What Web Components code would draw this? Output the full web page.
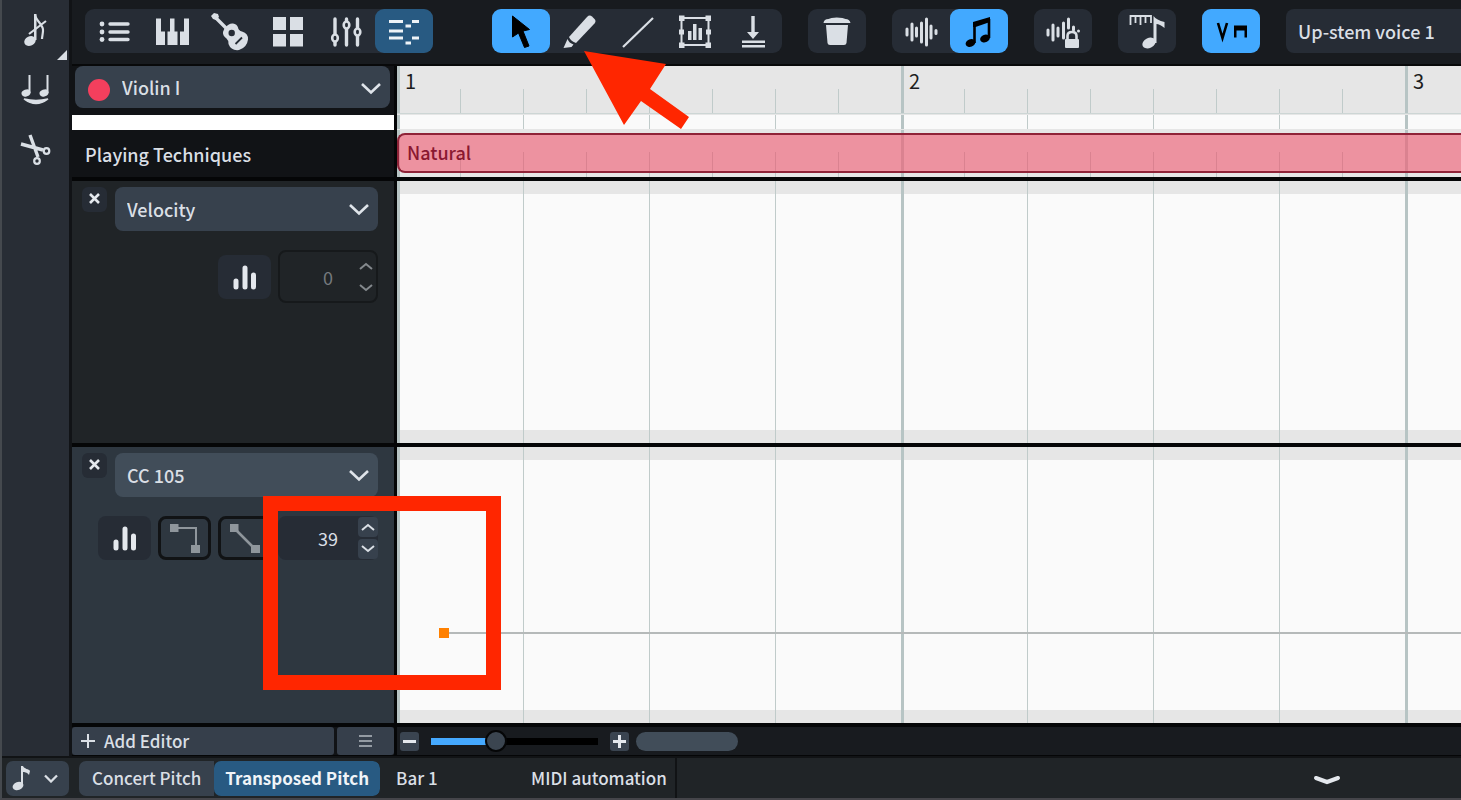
<!DOCTYPE html>
<html lang="en">
  <head>
    <meta charset="utf-8">
    <title>Key Editor</title>
    <style>
      html, body {
        height: 100%;
        margin: 0;
      }
      body {
        background: #111316;
        color: #dadfe5;
        font: 500 18px/24px "Noto Sans CJK SC", "Noto Sans", sans-serif;
        overflow: hidden;
      }
    </style>
  </head>
  <body>
    <template id="score-app-template">
      <style>
        :host {
          display: flex;
          flex-direction: column;
          height: 100%;
          min-height: 600px;
          position: relative;
          box-sizing: border-box;
          border-left: 2px solid #45494e;
          border-bottom: 2px solid #45454a;
          overflow: hidden;
        }
        .work {
          display: flex;
          flex: 1;
          min-height: 0;
          gap: 3px;
        }
        .zone {
          display: flex;
          flex-direction: column;
          flex: 1;
          min-width: 0;
        }
        .mark {
          position: absolute;
          pointer-events: none;
        }
        .arrow {
          left: 580px;
          top: 48px;
        }
        .frame {
          left: 261px;
          top: 496px;
          width: 208px;
          height: 164px;
          border: 15px solid #ff2600;
        }
      </style>
      <div class="work">
        <tool-box></tool-box>
        <div class="zone">
          <editor-toolbar></editor-toolbar>
          <key-editor></key-editor>
        </div>
      </div>
      <status-bar></status-bar>
      <svg class="mark arrow" width="112" height="84"><path fill="#ff2600" d="M2 3 84 16 68 41 107 69 99 81 59 53 42 77z"/></svg>
      <div class="mark frame"></div>
    </template>

    <template id="tool-box-template">
      <style>
        :host {
          display: flex;
          flex-direction: column;
          width: 67px;
          background: #282d35;
        }
        button {
          position: relative;
          height: 60px;
          padding: 0;
          border: 0;
          background: none;
          color: #dadfe5;
        }
        i {
          position: absolute;
          right: 2px;
          bottom: 0;
          border: 5px solid transparent;
          border-right-color: currentColor;
          border-bottom-color: currentColor;
        }
      </style>
      <button aria-label="Grace notes"><ui-icon name="grace"></ui-icon><i></i></button>
      <button aria-label="Tie"><ui-icon name="tie"></ui-icon></button>
      <button aria-label="Scissors"><ui-icon name="scissors"></ui-icon></button>
    </template>

    <template id="editor-toolbar-template">
      <style>
        :host {
          display: flex;
          align-items: center;
          gap: 26px;
          height: 44px;
          padding: 9px 0 11px 13px;
          background: #181b1f;
          border-bottom: 2px solid #08090a;
        }
        tool-group:first-of-type {
          margin-right: 33px;
        }
        .voice {
          flex: 1 0 164px;
          height: 44px;
          padding: 0 12px;
          border: 0;
          border-radius: 8px 0 0 8px;
          background: #262c35;
          color: inherit;
          font: inherit;
          appearance: none;
        }
      </style>
      <tool-group>
        <tool-button icon="list" label="Track list"></tool-button>
        <tool-button icon="piano" label="Keyboard"></tool-button>
        <tool-button icon="guitar" label="Fretboard"></tool-button>
        <tool-button icon="pads" label="Drum pads"></tool-button>
        <tool-button icon="mixer" label="Mixer"></tool-button>
        <tool-button icon="editor" label="Key editor" tone="deep"></tool-button>
      </tool-group>
      <tool-group>
        <tool-button icon="pointer" label="Select" tone="bright"></tool-button>
        <tool-button icon="pencil" label="Draw"></tool-button>
        <tool-button icon="line" label="Line"></tool-button>
        <tool-button icon="transform" label="Transform"></tool-button>
        <tool-button icon="drop" label="Percussion"></tool-button>
      </tool-group>
      <tool-group><tool-button icon="trash" label="Delete"></tool-button></tool-group>
      <tool-group>
        <tool-button icon="wave" label="Played durations"></tool-button>
        <tool-button icon="notes" label="Notated durations" tone="bright"></tool-button>
      </tool-group>
      <tool-group><tool-button icon="wavelock" label="Lock durations"></tool-button></tool-group>
      <tool-group><tool-button icon="ruler" label="Quantize"></tool-button></tool-group>
      <tool-group><tool-button icon="bows" label="Playing techniques" tone="bright"></tool-button></tool-group>
      <select class="voice" aria-label="Voice"><option>Up-stem voice 1</option></select>
    </template>

    <template id="key-editor-template">
      <style>
        :host {
          display: grid;
          grid-template-columns: 322px minmax(0, 1fr);
          grid-template-rows: 49px 58px minmax(0, 262fr) minmax(0, 277fr) 28px;
          column-gap: 3px;
          row-gap: 4px;
          flex: 1;
          min-height: 0;
          padding-bottom: 1px;
          background: #050607;
        }
        .track {
          padding: 0 4px 0 3px;
          background: #111316;
        }
        .techniques {
          display: flex;
          align-items: center;
          padding: 0 13px;
          border-top: 15px solid #fff;
          margin-top: -4px;
          background: #111316;
        }
        .add {
          display: flex;
          gap: 3px;
          background: #111316;
          font-size: 17px;
        }
        .add button {
          display: flex;
          align-items: center;
          justify-content: center;
          width: 57px;
          padding: 0;
          border: 0;
          border-radius: 3px;
          background: #363f4b;
          color: inherit;
          font: inherit;
        }
        .add .new {
          flex: 1;
          justify-content: flex-start;
          gap: 8px;
          padding-left: 8px;
        }
        .head {
          grid-column: 2;
          grid-row: 1 / 3;
        }
      </style>
      <div class="track"><drop-down dot label="Instrument">Violin I</drop-down></div>
      <time-ruler class="head"></time-ruler>
      <div class="techniques">Playing Techniques</div>
      <lane-panel name="Velocity" value="0"></lane-panel>
      <lane-grid></lane-grid>
      <lane-panel name="CC 105" value="39" active></lane-panel>
      <lane-grid point></lane-grid>
      <div class="add">
        <button class="new"><svg width="16" height="16" stroke="currentColor" stroke-width="2"><path d="M1 8h14M8 1v14"/></svg>Add Editor</button>
        <button aria-label="Editor menu"><svg width="14" height="14" stroke="#949ba3" stroke-width="2"><path d="M0 2h13M0 7h13M0 12h13"/></svg></button>
      </div>
      <zoom-bar></zoom-bar>
    </template>

    <template id="drop-down-template">
      <style>
        :host {
          display: flex;
          position: relative;
        }
        select {
          flex: 1;
          height: 44px;
          padding: 0 12px;
          border: 0;
          border-radius: 8px;
          background: var(--fill, #37414d);
          color: inherit;
          font: inherit;
          appearance: none;
        }
        :host([dot]) select {
          height: 42px;
          padding-left: 47px;
        }
        .dot {
          display: none;
          position: absolute;
          left: 13px;
          top: 13px;
          width: 22px;
          height: 22px;
          border-radius: 50%;
          background: #f43f5d;
        }
        :host([dot]) .dot {
          display: block;
        }
        svg {
          position: absolute;
          right: 9px;
          top: 16px;
          pointer-events: none;
        }
      </style>
      <select><option></option></select>
      <span class="dot"></span>
      <svg width="20" height="13" fill="none" stroke="#dfe4ea" stroke-width="2.6"><path d="M1 2 10 10.500 19 2"/></svg>
    </template>

    <template id="lane-panel-template">
      <style>
        :host {
          display: block;
          box-sizing: border-box;
          padding: 6px 16px 0 10px;
          background: #202427;
          overflow: hidden;
        }
        :host([active]) {
          background: #2e3740;
          --fill: #414d59;
        }
        .top {
          display: flex;
          align-items: flex-start;
          gap: 8px;
        }
        drop-down {
          flex: 1;
        }
        button {
          padding: 0;
          border: 0;
          border-radius: 8px;
          background: #262c35;
          color: #e4e8ed;
        }
        .close {
          width: 25px;
          height: 25px;
          border-radius: 6px;
        }
        .tools {
          display: flex;
          justify-content: flex-end;
          align-items: center;
          gap: 7px;
          margin-top: 19px;
        }
        .tools > button {
          display: flex;
          align-items: center;
          justify-content: center;
          width: 53px;
          height: 44px;
        }
        .tools > .shape {
          border: 3px solid #111315;
          background: none;
          color: #8f969c;
        }
        .number {
          display: flex;
          box-sizing: border-box;
          width: 100px;
          height: 53px;
          border: 2px solid #16191b;
          border-radius: 8px;
        }
        input {
          flex: 1;
          min-width: 0;
          padding: 0;
          border: 0;
          background: none;
          color: #dadfe5;
          font: inherit;
          font-weight: 400;
          text-align: center;
          padding-left: 20px;
        }
        input:disabled {
          color: #74797d;
        }
        .spin {
          display: flex;
          flex-direction: column;
          justify-content: center;
          gap: 2px;
          width: 20px;
        }
        .spin button {
          display: flex;
          align-items: center;
          justify-content: center;
          height: 20px;
          border-radius: 4px;
          background: none;
          color: #84898d;
        }
        :host([active]) .number {
          height: 44px;
          border: 0;
          background: #262c35;
        }
        :host([active]) .spin button {
          background: #37414d;
          color: #dadfe5;
        }
        :host(:not([active])) .shape {
          display: none;
        }
      </style>
      <div class="top">
        <button class="close" aria-label="Remove lane"><svg width="11" height="11" stroke="currentColor" stroke-width="2.6"><path d="m1 1 9 9M10 1 1 10"/></svg></button>
        <drop-down></drop-down>
      </div>
      <div class="tools">
        <button aria-label="Histogram"><svg width="26" height="28" stroke="currentColor" stroke-width="5" stroke-linecap="round"><path d="M4 18v6M13 5v19M21.500 12v12"/></svg></button>
        <button class="shape" aria-label="Constant"><svg width="32" height="32"><path fill="none" stroke="currentColor" stroke-width="2" d="M5 6h22v20"/><path fill="currentColor" d="M1 2h8.500v8H1zM22 23h9v8h-9z"/></svg></button>
        <button class="shape" aria-label="Linear"><svg width="32" height="32"><path fill="none" stroke="currentColor" stroke-width="2.500" d="m6 7 20 20"/><path fill="currentColor" d="M1 2h8.500v8H1zM22 23h9v8h-9z"/></svg></button>
        <div class="number">
          <input type="text" inputmode="numeric" aria-label="Value">
          <div class="spin">
            <button aria-label="Increase"><svg width="14" height="8" fill="none" stroke="currentColor" stroke-width="2"><path d="m1 7 6-5 6 5"/></svg></button>
            <button aria-label="Decrease"><svg width="14" height="8" fill="none" stroke="currentColor" stroke-width="2"><path d="m1 1 6 5 6-5"/></svg></button>
          </div>
        </div>
      </div>
    </template>

    <template id="time-ruler-template">
      <style>
        :host {
          --beat: linear-gradient(90deg, #c0cbca 1px, transparent 1px) 0 0 / 126px 100%;
          --half: linear-gradient(90deg, #c0cbca 1px, transparent 1px) 0 100% / 63px 24px repeat-x;
          --bars: linear-gradient(90deg, #b7c4c4 3px, transparent 3px) 0 0 / 504px 100%;
          display: grid;
          grid-template-rows: 48px 14px minmax(0, 1fr);
          row-gap: 1px;
          background: #e6e6e6;
        }
        .bars {
          display: grid;
          grid-auto-flow: column;
          grid-auto-columns: 504px;
          overflow: hidden;
          background: var(--bars), var(--half), #e6e6e6;
          border-bottom: 1px solid #cdd6d5;
          color: #1d1d1d;
          font-weight: 400;
          font-size: 20px;
        }
        .bars span {
          padding: 3px 8px;
        }
        .gap {
          background: var(--bars), var(--beat), #fafafa;
        }
        .row {
          display: flex;
          min-width: 0;
          padding: 3px 0 4px;
          background: var(--bars), var(--half), #e6e6e6;
        }
        .region {
          flex: 1;
          box-sizing: border-box;
          padding: 5px 8px;
          border: 2px solid #8f2338;
          border-right: 0;
          border-radius: 8px 0 0 8px;
          background: linear-gradient(90deg, #da8290 3px, transparent 3px) -2px 100% / 504px 100%,
            linear-gradient(90deg, #da8290 1px, transparent 1px) -2px 100% / 63px 19px repeat-x, #ed92a0;
          color: #8a1830;
        }
      </style>
      <div class="bars"><span>1</span><span>2</span><span>3</span></div>
      <div class="gap"></div>
      <div class="row"><div class="region">Natural</div></div>
    </template>

    <template id="lane-grid-template">
      <style>
        :host {
          display: block;
          position: relative;
          min-height: 0;
          background:
            linear-gradient(90deg, #b7c4c4 3px, transparent 3px) 0 0 / 504px 100%,
            linear-gradient(90deg, #c0cbca 1px, transparent 1px) 0 0 / 126px 100%,
            linear-gradient(#e6e6e6 13px, #fafafa 13px calc(100% - 13px), #e6e6e6 calc(100% - 13px));
        }
        .curve {
          display: none;
          position: absolute;
          left: 42px;
          right: 0;
          top: 67%;
          border-top: 2px solid #b5b9b9;
        }
        .curve::before {
          content: "";
          position: absolute;
          left: 0;
          top: -6px;
          width: 10px;
          height: 10px;
          background: #ff8000;
        }
        :host([point]) .curve {
          display: block;
        }
      </style>
      <div class="curve"></div>
    </template>

    <template id="zoom-bar-template">
      <style>
        :host {
          display: flex;
          align-items: center;
          gap: 12px;
          padding-left: 3px;
          background: #181b1f;
        }
        button {
          display: flex;
          align-items: center;
          justify-content: center;
          width: 19px;
          height: 19px;
          padding: 0;
          border: 0;
          border-radius: 3px;
          background: #3a4450;
        }
        input {
          appearance: none;
          width: 167px;
          height: 22px;
          margin: 0;
          border-radius: 4px;
          background: linear-gradient(90deg, #45a9ff 64px, #000 64px) 0 50% / 100% 7px no-repeat;
        }
        input::-webkit-slider-thumb {
          appearance: none;
          box-sizing: border-box;
          width: 22px;
          height: 22px;
          border: 2px solid #050607;
          border-radius: 50%;
          background: #3b4550;
        }
        .scroll {
          width: 102px;
          height: 19px;
          margin-left: -5px;
          border-radius: 10px;
          background: #414d59;
        }
      </style>
      <button aria-label="Zoom out"><svg width="13" height="13" stroke="#e4e8ed" stroke-width="3"><path d="M0 6.500h13"/></svg></button>
      <input type="range" min="0" max="100" value="37" aria-label="Zoom">
      <button aria-label="Zoom in"><svg width="13" height="13" stroke="#e4e8ed" stroke-width="3"><path d="M0 6.500h13M6.500 0v13"/></svg></button>
      <div class="scroll"></div>
    </template>

    <template id="status-bar-template">
      <style>
        :host {
          display: flex;
          align-items: center;
          height: 40px;
          padding-left: 4px;
          border-top: 2px solid #111315;
          background: #202427;
          font-size: 17px;
        }
        button {
          height: 35px;
          padding: 0 13px;
          border: 0;
          background: #37414d;
          color: inherit;
          font: inherit;
        }
        .note {
          display: flex;
          align-items: center;
          gap: 14px;
          width: 63px;
          padding: 0 6px;
          margin-right: 10px;
          border-radius: 7px;
        }
        .pitch {
          display: flex;
          margin-right: 16px;
          border-radius: 7px;
          overflow: hidden;
        }
        .pitch .on {
          padding: 0 11px;
          border-radius: 7px;
          background: #285a82;
          color: #f0f4f8;
          font-weight: 700;
        }
        .where {
          flex: 0 0 135px;
        }
        .kind {
          align-self: stretch;
          display: flex;
          align-items: center;
          padding-right: 8px;
          border-right: 2px solid #111315;
        }
        .fold {
          margin-left: auto;
          margin-right: 107px;
          background: none;
        }
      </style>
      <button class="note" aria-label="Note input"><svg width="18" height="26" fill="currentColor"><ellipse cx="6" cy="21" rx="5.500" ry="4" transform="rotate(-20 6 21)"/><path d="M9 1h2c1 3 6 3 7 5l-1 4c-2-3-5-3-6-3v14H9z"/></svg><svg width="14" height="9" fill="none" stroke="currentColor" stroke-width="2.300"><path d="m1 1.500 6 6 6-6"/></svg></button>
      <div class="pitch"><button>Concert Pitch</button><button class="on">Transposed Pitch</button></div>
      <span class="where">Bar 1</span>
      <span class="kind">MIDI automation</span>
      <button class="fold" aria-label="Collapse"><svg width="28" height="10" fill="none" stroke="#e4e8ed" stroke-width="4" stroke-linecap="round"><path d="m3 3 11 4 11-4"/></svg></button>
    </template>

    <script>
      // all glyphs are drawn on a 36x36 box
      const ICONS = {
        list: '<path d="M14 11h18M14 19h18M14 26.500h18" stroke="currentColor" stroke-width="3.400" stroke-linecap="round"/><circle cx="6" cy="11" r="2.400"/><circle cx="6" cy="19" r="2.400"/><circle cx="6" cy="26.500" r="2.400"/>',
        piano: '<path d="M2 5.500h5v13h4V32H2zM16 5.500h4.500v13h3V32h-10V18.500H16zM30 5.500h5V32h-9V18.500h4z"/>',
        guitar: '<path d="m2 3 13 13" stroke="currentColor" stroke-width="3.400"/><path d="M-1 3 2 0l4 1 1 3-3 3-3-1z"/><path d="M14 14q3-4 7-3.500 4 .500 5 4 .500 3 4 4 6.500 2 6 8-1 8-9 10.500-8 1-10.500-6 0-4-2-5.500-4-3-3.500-6.500.500-3 3-5z"/><circle cx="19.700" cy="20" r="3.200" fill="#262c35"/><path d="m23.500 31 6.500-6.500" stroke="#262c35" stroke-width="1.800"/>',
        pads: '<path d="M3 4h13v13H3zM20 4h13v13H20zM3 21h13v12.500H3zM20 21h13v12.500H20z"/>',
        mixer: '<g stroke="currentColor" stroke-width="3.400" stroke-linecap="round"><path d="M7 6v26M18.500 6v26M29.500 6v26"/></g><g fill="#262c35" stroke="currentColor" stroke-width="2.600"><ellipse cx="7" cy="25" rx="2.800" ry="3.500"/><ellipse cx="18.500" cy="12" rx="2.800" ry="3.500"/><ellipse cx="29.500" cy="19" rx="2.800" ry="3.500"/></g>',
        editor: '<path d="M3 8.500h14M3 18h14M3 25h14M19.500 13H25M26 8.500h7M26 25h7M19.500 30H25" stroke="currentColor" stroke-width="2.800"/>',
        pointer: '<path d="M9.500 3v21l6-4 6 14.500 4.500-1.500-6-15 6.500-1.500z" stroke="currentColor" stroke-linejoin="round"/>',
        pencil: '<path d="M8 24 26 4q2.500-2.500 5-.500l2.500 2.500q2 2 0 4.500L15 30q-5-1.500-7-6z"/><path d="M6.500 26q1.500 4 6 5.500L10.500 34l-8 1z"/>',
        line: '<path d="M4 34 34 5" stroke="currentColor" stroke-width="2.200"/>',
        transform: '<path d="M4.500 5h27v27h-27z" fill="none" stroke="currentColor" stroke-width="2"/><path d="M2 2.500h5.500V8H2zM28.500 2.500H34V8h-5.500zM2 29.500h5.500V35H2zM28.500 29.500H34V35h-5.500zM2 16.500h5v5H2zM29 16.500h5v5h-5zM11 18h3.500v9H11zM16 11h3.500v16H16zM21.500 15H25v12h-3.500z"/>',
        drop: '<path d="M16.300 3h3.400v16H24l-6 7-6-7h4.300zM7 27.500h23v2.500H7zM7 32h23v2.500H7z"/>',
        trash: '<path d="M4.500 10q.500-4 5-4l3-1q5-1 11 0l3 1q4 0 5 4zM7 12h22l-1.500 18q-.300 2-2.500 2H11q-2.200 0-2.500-2z"/>',
        wave: '<path d="M4 16v6M9 11v16M13.500 15v8M18.500 10v19M23.500 6v26M28 13v12M33 17.500v3" stroke="currentColor" stroke-width="3" stroke-linecap="round"/>',
        notes: '<path d="M12 9 29 4v5L14.500 14H12z"/><path d="M13.500 9v21M28 6v19" stroke="currentColor" stroke-width="2.600"/><ellipse cx="9.500" cy="30" rx="5" ry="3.800" transform="rotate(-20 9.500 30)"/><ellipse cx="24" cy="25.500" rx="5" ry="3.800" transform="rotate(-20 24 25.500)"/>',
        wavelock: '<path d="M3 17v5M8 12v15M13 15v8M18.500 10v15M23.500 6v9M28.500 14v3M33.500 18v0" stroke="currentColor" stroke-width="3" stroke-linecap="round"/><path d="M22.500 27v-4q0-4 4.500-4t4.500 4v4" fill="none" stroke="currentColor" stroke-width="2.600"/><rect x="20" y="26" width="14" height="9" rx="1"/>',
        ruler: '<path d="M1.500 12V3H22v7M6.500 3v7M11.500 3v9M16.500 3v7" fill="none" stroke="currentColor" stroke-width="1.800"/><path d="M24.500 3q3 4 11 6v6q-5-4-8-4v19h-3z"/><ellipse cx="20" cy="30" rx="7" ry="5" transform="rotate(-25 20 30)"/>',
        bows: '<path d="m5 10 4.500 15 4.500-15" fill="none" stroke="currentColor" stroke-width="2.600"/><path d="M21 12.500h13v12h-2.500v-7h-8v7H21z"/>',
        grace: '<ellipse cx="12" cy="29" rx="6" ry="4.600" transform="rotate(-25 12 29)"/><path d="M16 2h2.500v26H16z"/><path d="M17 3c1 6 9 10 8 16-.300 4-1 6-1 8M11 22 28 9" fill="none" stroke="currentColor" stroke-width="2.200"/>',
        tie: '<ellipse cx="8" cy="21" rx="4.600" ry="3.400" transform="rotate(-20 8 21)"/><ellipse cx="26" cy="21" rx="4.600" ry="3.400" transform="rotate(-20 26 21)"/><path d="M11.500 3v18M29.500 3v18" stroke="currentColor" stroke-width="2"/><path d="M6 27q12 9 24 0-12 3-24 0z" stroke="currentColor" stroke-width="1.500"/>',
        scissors: '<path d="m12 3 8 22M3 12l22 6" fill="none" stroke="currentColor" stroke-width="3.400"/><circle cx="19" cy="29" r="2.800" fill="none" stroke="currentColor" stroke-width="2.200"/><circle cx="28.500" cy="19" r="2.800" fill="none" stroke="currentColor" stroke-width="2.200"/>'
      };

      function attach(el, id) {
        const shadowRoot = el.attachShadow({mode: 'open'});
        shadowRoot.appendChild(document.querySelector(`#${id}-template`).content.cloneNode(true));
        return shadowRoot;
      }

      class UiIcon extends HTMLElement {
        connectedCallback() {
          if (this.shadowRoot) return;
          this.attachShadow({mode: 'open'}).innerHTML = `
            <style>
              :host { display: inline-block; width: 36px; height: 36px; vertical-align: middle; }
              svg { display: block; overflow: visible; }
            </style>
            <svg width="36" height="36" viewBox="0 0 36 36" fill="currentColor" aria-hidden="true">${ICONS[this.getAttribute('name')]}</svg>`;
        }
      }
      customElements.define('ui-icon', UiIcon);

      class ToolGroup extends HTMLElement {
        constructor() {
          super();
          this.attachShadow({mode: 'open'}).innerHTML = `
            <style>
              :host { display: flex; flex: none; border-radius: 9px; background: #262c35; }
            </style>
            <slot></slot>`;
        }
      }
      customElements.define('tool-group', ToolGroup);

      class ToolButton extends HTMLElement {
        connectedCallback() {
          if (this.shadowRoot) return;
          this.attachShadow({mode: 'open'}).innerHTML = `
            <style>
              :host { display: block; }
              button {
                display: flex;
                align-items: center;
                justify-content: center;
                width: 58px;
                height: 44px;
                padding: 0;
                border: 0;
                border-radius: 9px;
                background: none;
                color: #dadfe5;
              }
              :host([tone=deep]) button { background: #285a82; color: #eef3f7; }
              :host([tone=bright]) button { background: #42a9ff; color: #000; }
            </style>
            <button aria-label="${this.getAttribute('label')}"><ui-icon name="${this.getAttribute('icon')}"></ui-icon></button>`;
        }
      }
      customElements.define('tool-button', ToolButton);

      class DropDown extends HTMLElement {
        connectedCallback() {
          if (this.shadowRoot) return;
          const root = attach(this, 'drop-down');
          root.querySelector('option').textContent = this.textContent;
          root.querySelector('select').setAttribute('aria-label', this.getAttribute('label') || 'Lane type');
        }
      }
      customElements.define('drop-down', DropDown);

      class LanePanel extends HTMLElement {
        connectedCallback() {
          if (this.shadowRoot) return;
          const content = document.querySelector('#lane-panel-template').content.cloneNode(true);
          content.querySelector('drop-down').textContent = this.getAttribute('name');
          const input = content.querySelector('input');
          input.setAttribute('value', this.getAttribute('value'));
          input.disabled = !this.hasAttribute('active');
          this.attachShadow({mode: 'open'}).appendChild(content);
        }
      }
      customElements.define('lane-panel', LanePanel);

      // the rest only clone their template
      for (const id of ['tool-box', 'editor-toolbar', 'time-ruler', 'lane-grid', 'zoom-bar', 'status-bar', 'key-editor', 'score-app']) {
        customElements.define(id, class extends HTMLElement {
          constructor() {
            super();
            attach(this, id);
          }
        });
      }
    </script>

    <score-app></score-app>
  </body>
</html>
